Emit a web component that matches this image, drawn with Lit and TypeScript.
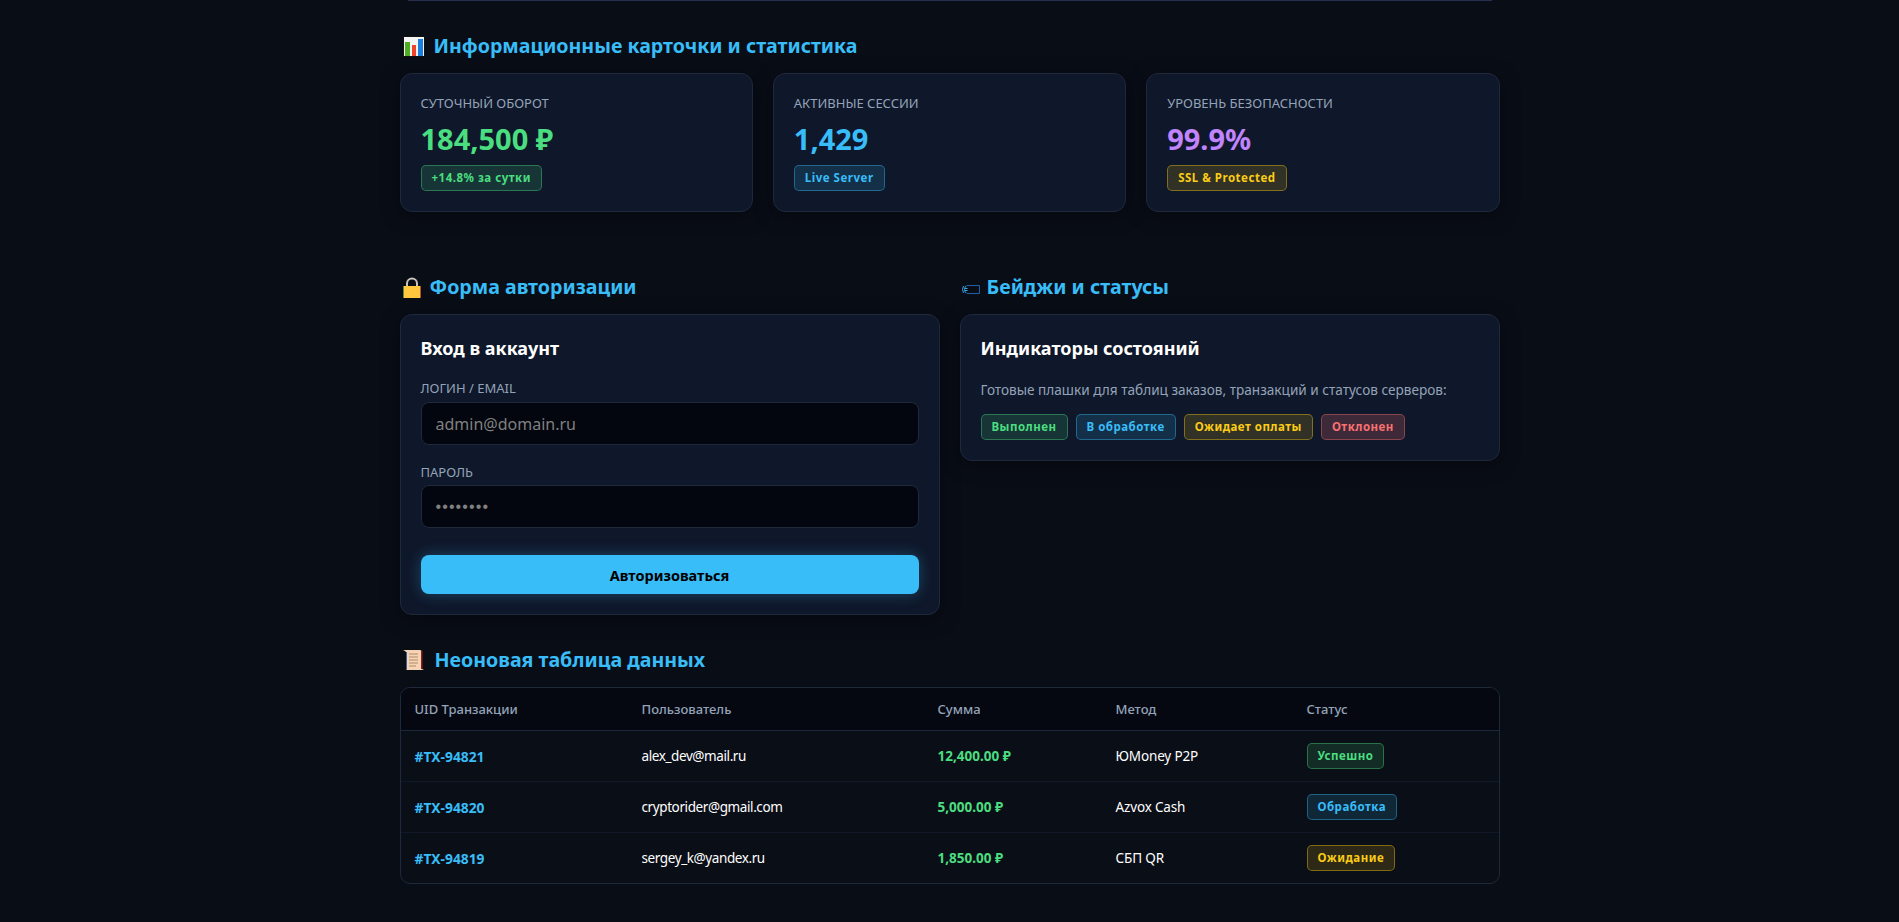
import { LitElement, css, html } from "lit";
import { customElement } from "lit/decorators.js";

const chartIcon = html`<svg class="icon chart" viewBox="0 0 22 21" aria-hidden="true">
  <rect width="22" height="21" fill="#111"></rect>
  <rect x="1" y="1" width="20" height="19" fill="#f4f4f4"></rect>
  <rect x="2" y="6" width="5" height="14" fill="#4caf1f"></rect>
  <rect x="9" y="9" width="4" height="11" fill="#f0442c"></rect>
  <rect x="15" y="3" width="5" height="17" fill="#1a7fe0"></rect>
</svg>`;

const lockIcon = html`<svg class="icon lock" viewBox="0 0 18 21" aria-hidden="true">
  <path d="M4 10V6.500a5 5 0 0110 0V10" fill="none" stroke="#c9c4bb" stroke-width="2"></path>
  <rect x="0" y="9" width="18" height="12" rx="1" fill="#ffc83d"></rect>
  <rect x="0" y="9" width="1" height="12" fill="#5c8a3a"></rect>
  <rect x="17" y="9" width="1" height="12" fill="#b0562c"></rect>
</svg>`;

const tagIcon = html`<svg class="icon tag" viewBox="0 0 19 9" aria-hidden="true">
  <path d="M6 .500h12.500v8H6" fill="none" stroke="#1f5fa8" stroke-width="1"></path>
  <path d="M2.500 1Q.500 4.500 2.500 8M5.500 1Q3.500 1.500 3.500 4.500T5.500 8M4 3.500h2.500M4 5.500h2.500" fill="none" stroke="#38a4e8" stroke-width="1"></path>
</svg>`;

const scrollIcon = html`<svg class="icon scroll" viewBox="0 0 22 22" aria-hidden="true">
  <path d="M0 1h17l2 1v18l2 1H4l-1-1V3L2 2z" fill="#f6d3b4"></path>
  <path d="M18 2h1.500v18H18z" fill="#8a1f12"></path>
  <path d="M3 3h1v17H3z" fill="#3d5a9a"></path>
  <path d="M6 5h9M6 8h9M6 11h9M6 14h9M6 17h7" stroke="#b08a6a" stroke-width="1.200"></path>
</svg>`;

const rows = [
  { id: "#TX-94821", user: "alex_dev@mail.ru", sum: "12,400.00 ₽", method: "ЮMoney P2P", status: "Успешно", tone: "green" },
  { id: "#TX-94820", user: "cryptorider@gmail.com", sum: "5,000.00 ₽", method: "Azvox Cash", status: "Обработка", tone: "blue" },
  { id: "#TX-94819", user: "sergey_k@yandex.ru", sum: "1,850.00 ₽", method: "СБП QR", status: "Ожидание", tone: "yellow" },
];

@customElement("app-root")
export class AppRoot extends LitElement {
  static override styles = css`
    :host {
      display: block;
      min-height: 922px;
      background: #090d16;
      color: #fff;
      font-family: "Noto Sans", "Open Sans", sans-serif;
    }
    .wrap {
      width: 1100px;
      margin: 0 auto;
      padding-bottom: 38px;
    }
    .topline {
      height: 1px;
      margin: 0 8px;
      background: #262f4d;
    }
    h2 {
      display: flex;
      align-items: center;
      box-sizing: border-box;
      height: 28px;
      margin: 0 0 13px;
      padding-bottom: 2px;
      font-size: 19.600px;
      font-weight: 700;
      color: #38bdf8;
    }
    .first {
      margin-top: 31px;
    }
    .icon {
      flex: none;
      display: block;
    }
    .chart {
      width: 22px;
      height: 21px;
      margin: 2px 9px 0 3px;
    }
    .lock {
      width: 18px;
      height: 21px;
      margin: 2px 9px 0 3px;
    }
    .tag {
      width: 19px;
      height: 9px;
      margin: 6px 7px 0 1px;
    }
    .scroll {
      width: 22px;
      height: 22px;
      margin: 2px 10px 0 3px;
    }
    .stats {
      display: grid;
      grid-template-columns: repeat(3, 1fr);
      gap: 20px;
      margin-bottom: 61px;
    }
    .columns {
      display: grid;
      grid-template-columns: 1fr 1fr;
      gap: 20px;
      align-items: start;
      margin-bottom: 31px;
    }
    .card {
      box-sizing: border-box;
      padding: 20px;
      background: #0f172a;
      border: 1px solid #1e293b;
      border-radius: 12px;
      box-shadow: 0 4px 20px rgba(0, 0, 0, 0.4);
    }
    .stat {
      display: flex;
      flex-direction: column;
      align-items: flex-start;
      height: 139px;
    }
    .stat-label {
      margin-top: -1px;
      font-size: 13px;
      line-height: 20px;
      color: #94a3b8;
      text-transform: uppercase;
    }
    .stat-value {
      margin: 6px 0;
      font-size: 29px;
      font-weight: 700;
      line-height: 40px;
    }
    .green-text {
      color: #4ade80;
    }
    .blue-text {
      color: #38bdf8;
    }
    .purple-text {
      color: #c084fc;
    }
    .badge {
      display: inline-block;
      box-sizing: border-box;
      height: 26px;
      padding: 0 10px;
      border: 1px solid;
      border-radius: 5px;
      font-size: 11.500px;
      font-weight: 700;
      line-height: 24px;
      letter-spacing: 0.5px;
      white-space: nowrap;
    }
    .badge.green {
      color: #4ade80;
      background: rgba(74, 222, 128, 0.15);
      border-color: rgba(74, 222, 128, 0.4);
    }
    .badge.blue {
      color: #38bdf8;
      background: rgba(56, 189, 248, 0.15);
      border-color: rgba(56, 189, 248, 0.4);
    }
    .badge.yellow {
      color: #facc15;
      background: rgba(250, 204, 21, 0.15);
      border-color: rgba(250, 204, 21, 0.4);
    }
    .badge.red {
      color: #f87171;
      background: rgba(248, 113, 113, 0.2);
      border-color: rgba(248, 113, 113, 0.4);
    }
    h3 {
      margin: 1px 0 0;
      font-size: 18px;
      font-weight: 700;
      line-height: 24px;
      color: #fff;
    }
    .field-label {
      display: block;
      margin: 18px 0 4px;
      font-size: 13px;
      line-height: 18px;
      color: #94a3b8;
      text-transform: uppercase;
    }
    h3 + .field-label {
      margin: 19px 0 5px;
    }
    input {
      display: block;
      box-sizing: border-box;
      width: 100%;
      height: 43px;
      padding: 0 14px;
      background: #03060e;
      border: 1px solid #1e293b;
      border-radius: 8px;
      font: inherit;
      font-size: 16px;
      color: #fff;
      outline: none;
    }
    input::placeholder {
      color: #808080;
      opacity: 1;
    }
    .password {
      font-family: "Liberation Sans", sans-serif;
      letter-spacing: 1.100px;
    }
    button {
      display: block;
      width: 100%;
      height: 39px;
      margin-top: 27px;
      padding: 0;
      background: #38bdf8;
      border: none;
      border-radius: 8px;
      box-shadow: 0 0 15px rgba(56, 189, 248, 0.3);
      font: inherit;
      font-size: 14.500px;
      font-weight: 700;
      color: #000;
    }
    .hint {
      margin: 20px 0 14px;
      font-size: 13.600px;
      line-height: 20px;
      color: #94a3b8;
    }
    .badges {
      display: flex;
      gap: 8px;
    }
    .table-box {
      overflow: hidden;
      background: #0a0e17;
      border: 1px solid #1e293b;
      border-radius: 10px;
    }
    table {
      width: 100%;
      table-layout: fixed;
      border-collapse: collapse;
      font-size: 13.500px;
    }
    .c1 {
      width: 228px;
    }
    .c2 {
      width: 296px;
    }
    .c3 {
      width: 178px;
    }
    .c4 {
      width: 191px;
    }
    th {
      height: 41px;
      padding: 0 13px 1px;
      background: #050811;
      border-bottom: 1px solid #1e293b;
      font-size: 13px;
      font-weight: 500;
      text-align: left;
      color: #94a3b8;
    }
    td {
      height: 50px;
      padding: 0 13px;
      border-bottom: 1px solid #111827;
      color: #fff;
    }
    th:first-child,
    td:first-child {
      padding-left: 14px;
    }
    tr:last-child td {
      border-bottom: none;
    }
    .uid {
      font-size: 13.800px;
      font-weight: 700;
      color: #38bdf8;
    }
    .user {
      letter-spacing: -0.4px;
    }
    .method {
      letter-spacing: -0.15px;
    }
    .sum {
      font-weight: 700;
      color: #4ade80;
    }
  `;

  override render() {
    return html`<div class="wrap">
      <div class="topline"></div>

      <h2 class="first">${chartIcon}Информационные карточки и статистика</h2>
      <div class="stats">
        <div class="card stat">
          <div class="stat-label">Суточный оборот</div>
          <div class="stat-value green-text">184,500 ₽</div>
          <span class="badge green">+14.8% за сутки</span>
        </div>
        <div class="card stat">
          <div class="stat-label">Активные сессии</div>
          <div class="stat-value blue-text">1,429</div>
          <span class="badge blue">Live Server</span>
        </div>
        <div class="card stat">
          <div class="stat-label">Уровень безопасности</div>
          <div class="stat-value purple-text">99.9%</div>
          <span class="badge yellow">SSL &amp; Protected</span>
        </div>
      </div>

      <div class="columns">
        <div>
          <h2>${lockIcon}Форма авторизации</h2>
          <div class="card">
            <h3>Вход в аккаунт</h3>
            <label class="field-label">Логин / Email</label>
            <input type="text" placeholder="admin@domain.ru" />
            <label class="field-label">Пароль</label>
            <input class="password" type="text" placeholder="••••••••" />
            <button>Авторизоваться</button>
          </div>
        </div>
        <div>
          <h2>${tagIcon}Бейджи и статусы</h2>
          <div class="card">
            <h3>Индикаторы состояний</h3>
            <p class="hint">Готовые плашки для таблиц заказов, транзакций и статусов серверов:</p>
            <div class="badges">
              <span class="badge green">Выполнен</span>
              <span class="badge blue">В обработке</span>
              <span class="badge yellow">Ожидает оплаты</span>
              <span class="badge red">Отклонен</span>
            </div>
          </div>
        </div>
      </div>

      <h2>${scrollIcon}Неоновая таблица данных</h2>
      <div class="table-box">
        <table>
          <colgroup>
            <col class="c1" />
            <col class="c2" />
            <col class="c3" />
            <col class="c4" />
            <col />
          </colgroup>
          <thead>
            <tr>
              <th>UID Транзакции</th>
              <th>Пользователь</th>
              <th>Сумма</th>
              <th>Метод</th>
              <th>Статус</th>
            </tr>
          </thead>
          <tbody>
            ${rows.map(
              (r) => html`<tr>
                <td class="uid">${r.id}</td>
                <td class="user">${r.user}</td>
                <td class="sum">${r.sum}</td>
                <td class="method">${r.method}</td>
                <td><span class="badge ${r.tone}">${r.status}</span></td>
              </tr>`
            )}
          </tbody>
        </table>
      </div>
    </div>`;
  }
}
